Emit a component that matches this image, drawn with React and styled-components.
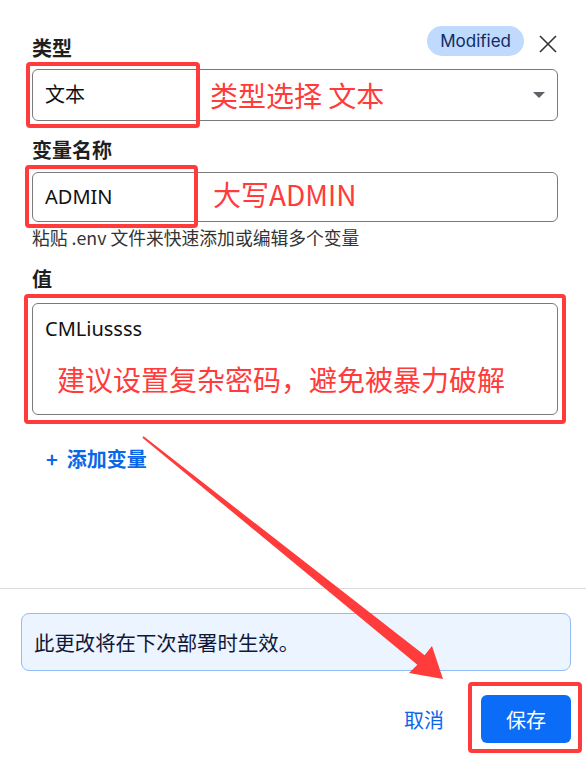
import React from 'react';
import styled, { createGlobalStyle } from 'styled-components';

const GlobalStyle = createGlobalStyle`
    html, body {
        margin: 0;
        padding: 0;
        background: #fff;
    }
    body {
        font-family: "Noto Sans", "Noto Sans CJK SC", sans-serif;
        color: #1f1f1f;
    }
`

const RED = '#ff3b3b';
const BLUE = '#0b66e8';

const Page = styled.div`
    position: relative;
    width: 586px;
    height: 762px;
    display: flex;
    flex-direction: column;
    overflow: hidden;
`

const Body = styled.div`
    flex: 1;
    padding: 26px 28px 0 32px;
    display: flex;
    flex-direction: column;
`

const HeaderRow = styled.div`
    display: flex;
    justify-content: space-between;
    align-items: flex-start;
`

const Label = styled.div`
    font-family: "Noto Sans CJK SC", sans-serif;
    font-size: 20px;
    font-weight: 700;
    line-height: 28px;
    color: #1f1f1f;
    margin-top: ${p => p.$top || 0}px;
`

const HeaderActions = styled.div`
    display: flex;
    align-items: center;
    gap: 14px;
`

const Badge = styled.span`
    display: inline-flex;
    align-items: center;
    height: 30px;
    padding: 0 13px;
    border-radius: 15px;
    background: #bfdafc;
    color: #0f2a66;
    font-family: "Inter", sans-serif;
    font-size: 17px;
`

const CloseBtn = styled.button`
    border: none;
    background: none;
    padding: 0;
    width: 20px;
    height: 20px;
    display: flex;
    align-items: center;
    justify-content: center;
    color: #333;
    margin-top: 6px;
`

const Field = styled.div`
    box-sizing: border-box;
    height: ${p => p.$h}px;
    margin-top: ${p => p.$top}px;
    border: 1px solid #7a7a7a;
    border-radius: 6px;
    padding: 0 12px;
    display: flex;
    align-items: ${p => (p.$multi ? 'flex-start' : 'center')};
    justify-content: space-between;
    font-size: 20px;
    color: #111;
`

const FieldText = styled.span`
    font-family: "Noto Sans", "Noto Sans CJK SC", sans-serif;
    font-size: 20px;
    line-height: 28px;
    padding-top: ${p => (p.$multi ? 11 : 0)}px;
`

const Caret = styled.span`
    width: 0;
    height: 0;
    border-left: 6.5px solid transparent;
    border-right: 6.5px solid transparent;
    border-top: 6px solid #5f6368;
`

const Helper = styled.div`
    margin-top: 3px;
    font-family: "Noto Sans CJK SC", sans-serif;
    font-size: 17.8px;
    line-height: 24px;
    color: #333;
`

const AddLink = styled.button`
    align-self: flex-start;
    margin: 30px 0 0 14px;
    padding: 0;
    border: none;
    background: none;
    font-family: "Noto Sans CJK SC", sans-serif;
    font-size: 20px;
    font-weight: 700;
    line-height: 28px;
    color: ${BLUE};
    display: flex;
    gap: 9px;
`

const Divider = styled.hr`
    margin: 0;
    border: none;
    border-top: 1px solid #dcdcdc;
`

const Footer = styled.div`
    padding: 24px 15px 19px 21px;
    display: flex;
    flex-direction: column;
    gap: 24px;
`

const Notice = styled.div`
    box-sizing: border-box;
    height: 58px;
    border: 1px solid #93bdf5;
    border-radius: 8px;
    background: #ebf4ff;
    padding: 0 12px;
    display: flex;
    align-items: center;
    font-family: "Noto Sans CJK SC", sans-serif;
    font-size: 20.4px;
    color: #10183a;
`

const Actions = styled.div`
    display: flex;
    justify-content: flex-end;
    align-items: center;
    gap: 37px;
`

const TextButton = styled.button`
    border: none;
    background: none;
    padding: 0;
    font-family: "Noto Sans CJK SC", sans-serif;
    font-size: 20px;
    color: ${BLUE};
`

const PrimaryButton = styled.button`
    width: 90px;
    height: 48px;
    border: none;
    border-radius: 6px;
    background: #0b6cf7;
    color: #fff;
    font-family: "Noto Sans CJK SC", sans-serif;
    font-size: 20px;
`

/* red markup drawn on top of the form */
const Mark = styled.div`
    position: absolute;
    box-sizing: border-box;
    left: ${p => p.$x}px;
    top: ${p => p.$y}px;
    width: ${p => p.$w}px;
    height: ${p => p.$h}px;
    border: 4px solid ${RED};
    border-radius: 4px;
    pointer-events: none;
`

const Note = styled.div`
    position: absolute;
    left: ${p => p.$x}px;
    top: ${p => p.$y}px;
    font-family: "Noto Sans CJK SC", sans-serif;
    font-size: 28px;
    line-height: 36px;
    color: ${RED};
    white-space: nowrap;
    pointer-events: none;
`

const Overlay = styled.svg`
    position: absolute;
    left: 0;
    top: 0;
    pointer-events: none;
`

const Arrow = () => (
    <Overlay width="586" height="762" viewBox="0 0 586 762">
        <polygon
            points="143,437 143.6,436.3 424.6,655.3 432,646 443,679 409,673 417.4,664.7 142.4,437.7"
            fill={RED}
        />
    </Overlay>
)

const App = () => {
    return (
        <Page>
            <GlobalStyle />
            <Body>
                <HeaderRow>
                    <Label $top={8}>类型</Label>
                    <HeaderActions>
                        <Badge>Modified</Badge>
                        <CloseBtn aria-label="close">
                            <svg width="20" height="20" viewBox="0 0 20 20" fill="none" stroke="currentColor" strokeWidth="1.6">
                                <path d="M2 2 L18 18 M18 2 L2 18" />
                            </svg>
                        </CloseBtn>
                    </HeaderActions>
                </HeaderRow>
                <Field $h={52} $top={7}>
                    <FieldText>文本</FieldText>
                    <Caret />
                </Field>

                <Label $top={15}>变量名称</Label>
                <Field $h={50} $top={8}>
                    <FieldText>ADMIN</FieldText>
                </Field>
                <Helper>粘贴 .env 文件来快速添加或编辑多个变量</Helper>

                <Label $top={16}>值</Label>
                <Field $h={112} $top={10} $multi>
                    <FieldText $multi>CMLiussss</FieldText>
                </Field>

                <AddLink>
                    <span>+</span>
                    <span>添加变量</span>
                </AddLink>
            </Body>
            <Divider />
            <Footer>
                <Notice>此更改将在下次部署时生效。</Notice>
                <Actions>
                    <TextButton>取消</TextButton>
                    <PrimaryButton>保存</PrimaryButton>
                </Actions>
            </Footer>

            <Mark $x={26} $y={62} $w={174} $h={66} />
            <Note $x={210} $y={77}>类型选择 文本</Note>
            <Mark $x={25} $y={165} $w={173} $h={63} />
            <Note $x={213} $y={176}>大写ADMIN</Note>
            <Mark $x={24} $y={294} $w={542} $h={130} />
            <Note $x={57} $y={361}>建议设置复杂密码，避免被暴力破解</Note>
            <Mark $x={468} $y={682} $w={114} $h={71} />
            <Arrow />
        </Page>
    )
}

export default App;
